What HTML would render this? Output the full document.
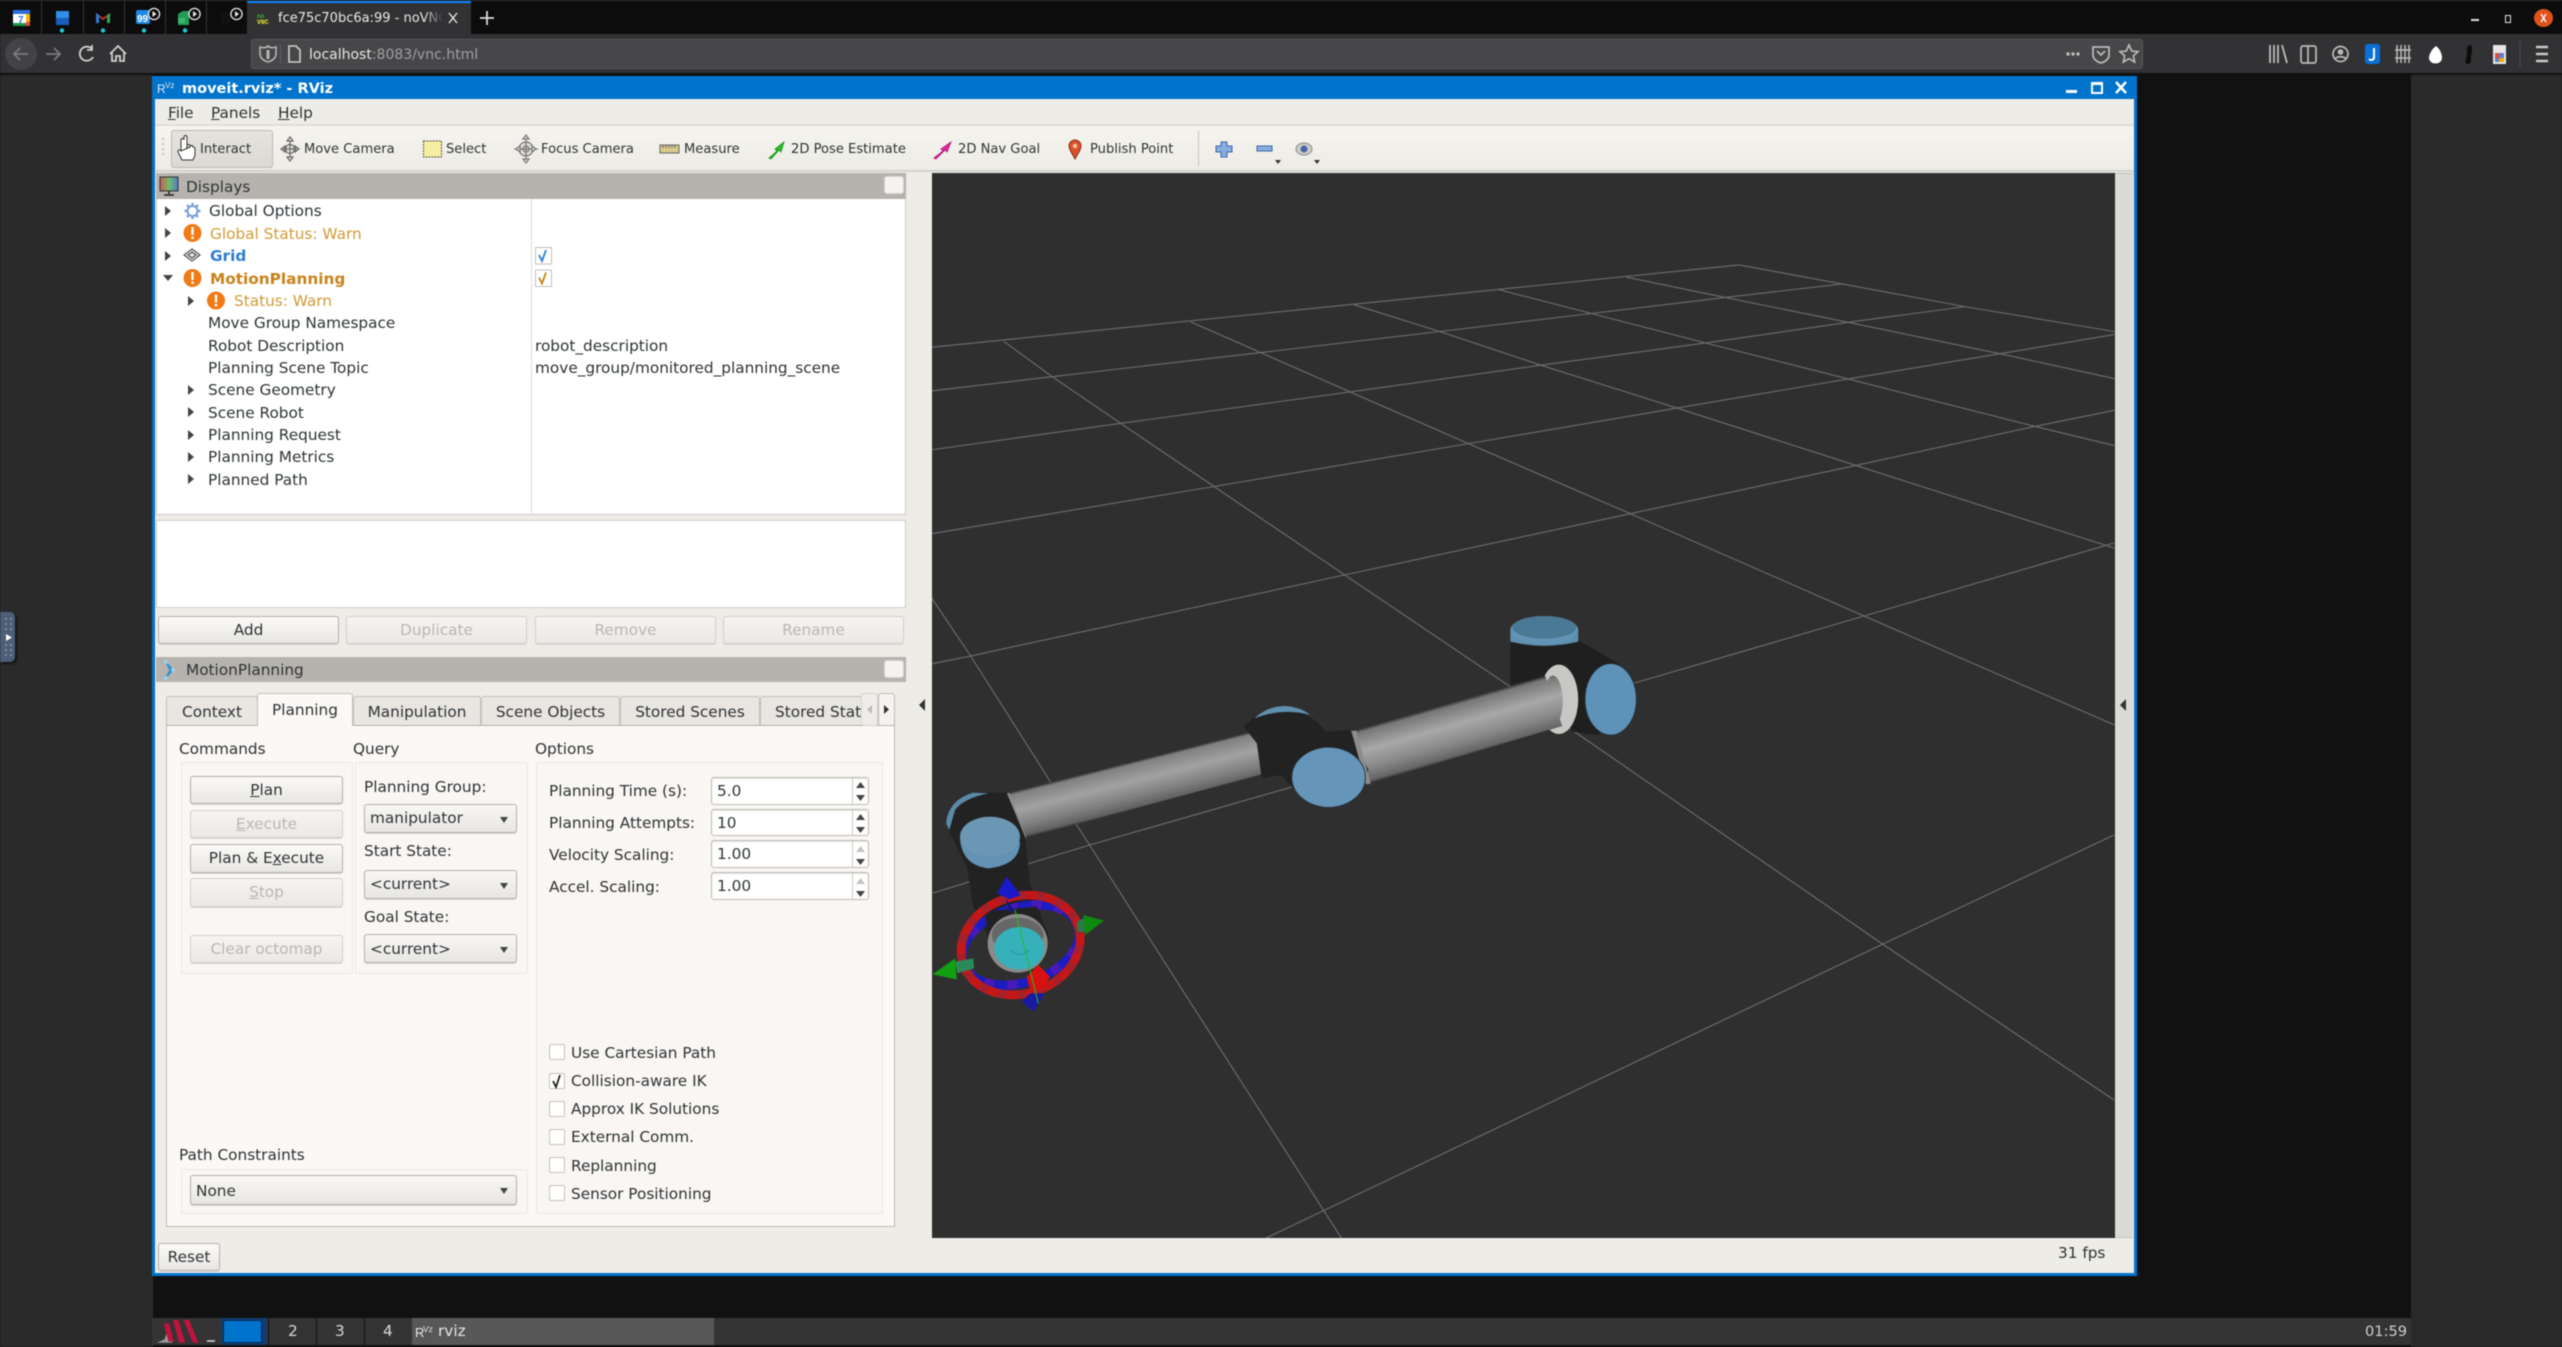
<!DOCTYPE html>
<html><head><meta charset="utf-8"><title>moveit.rviz - RViz</title>
<style>
html,body{margin:0;padding:0;background:#111}
#p{position:relative;width:2562px;height:1347px;overflow:hidden;background:#111;font-family:"DejaVu Sans","Liberation Sans",sans-serif;font-size:15.3px;color:#2e3436;filter:blur(.45px)}
#p div,#p span,#p svg{position:absolute;box-sizing:border-box}
.t{white-space:nowrap;line-height:20px;height:20px}
.tb{font-size:13.1px}
.b{background:linear-gradient(#fbfaf8,#e8e6e2);border:1px solid #b3b0ab;border-radius:3px;text-align:center;line-height:26px;white-space:nowrap;box-shadow:0 1px 0 #d8d6d2}
.d{color:#b9b7b3;border-color:#d2cfcb;background:linear-gradient(#f6f4f1,#ebe9e5)}
.c{background:linear-gradient(#f8f7f5,#e8e6e2);border:1px solid #b3b0ab;border-radius:3px;line-height:28px;padding-left:5px;white-space:nowrap;box-shadow:0 1px 0 #d8d6d2}
.c:after{content:"";position:absolute;right:8px;top:12px;border-left:4.5px solid transparent;border-right:4.5px solid transparent;border-top:6px solid #444}
.s{background:#fff;border:1px solid #bdbab5;border-radius:3px;line-height:27px;padding-left:5px;box-shadow:inset 0 1px 1px #e4e2df}
.s:before{content:"";position:absolute;right:15px;top:0;bottom:0;width:1px;background:#d0cdc9}
.k{width:16px;height:16px;background:#fff;border:1px solid #c4c1bd;border-radius:2px}
.tab{top:696px;height:30px;background:#e9e6e2;border:1px solid #c3c0bb;border-bottom:1px solid #b3b0ab;text-align:center;line-height:30px;white-space:nowrap;overflow:hidden;border-radius:3px 3px 0 0}
.g{background:#f9f6f3;border:1px solid #ece9e5;border-radius:2px}
.h{background:#b6b2ae}
.f{width:20px;height:18px;background:#f4f3f1;border:1px solid #d6d3cf;border-radius:3px}
.w{color:#d19b36}
</style></head>
<body><div id="p">

<!-- browser chrome -->
<div style="left:0;top:0;width:2562px;height:34px;background:#0c0c0c;border-top:1px solid #2e2e2e"></div>
<div style="left:0;top:34px;width:2562px;height:40px;background:#323234;border-bottom:1px solid #111"></div>
<div style="left:41px;top:1px;width:1px;height:33px;background:#333"></div>
<div style="left:83px;top:1px;width:1px;height:33px;background:#333"></div>
<div style="left:124px;top:1px;width:1px;height:33px;background:#333"></div>
<div style="left:165px;top:1px;width:1px;height:33px;background:#333"></div>
<div style="left:206px;top:1px;width:1px;height:33px;background:#333"></div>
<div style="left:247px;top:1px;width:224px;height:33px;background:#323234;border-top:2px solid #0a84ff"></div>
<svg style="left:0;top:0" width="520" height="34" viewBox="0 0 520 34">
<rect x="13" y="10" width="17" height="16" rx="2" fill="#fff"/><rect x="13" y="10" width="17" height="4" fill="#2a6fe0"/><rect x="26" y="14" width="4" height="8" fill="#f4b400"/><rect x="13" y="23" width="13" height="3" fill="#189a48"/><rect x="26" y="22" width="4" height="4" fill="#e24a33"/>
<text x="18" y="23" font-size="10" font-weight="bold" fill="#2a6fe0" font-family="Liberation Sans">7</text>
<rect x="56" y="11" width="13" height="7" fill="#2f8fe8"/><rect x="56" y="18" width="13" height="7" fill="#1a5dbb"/>
<path d="M96 23V13l7 5 7-5v10h-3v-6l-4 3-4-3v6z" fill="#d83b2e"/><path d="M96 23V13l3 2v8z" fill="#2a7de1"/><path d="M107 23V15l3-2v10z" fill="#2eaa55"/>
<path d="M136 12a2 2 0 0 1 2-2h10a2 2 0 0 1 2 2v10a2 2 0 0 1-2 2h-10a2 2 0 0 1-2-2z" fill="#1e88e5"/><text x="137" y="22" font-size="10" font-weight="bold" fill="#fff" font-family="Liberation Sans">99</text>
<path d="M178 14l5-3h6v14h-11z" fill="#1f9d55"/><rect x="178" y="18" width="7" height="5" fill="#3cb371"/>
<rect x="221" y="12" width="9" height="12" fill="#111"/>
<g fill="#0c0c0c" stroke="#e8e8e8" stroke-width="1.3"><circle cx="154" cy="14" r="5.6"/><circle cx="194.500" cy="14" r="5.6"/><circle cx="236.500" cy="14" r="5.600"/></g>
<g fill="#e8e8e8"><path d="M152.500 11l4 3-4 3z"/><path d="M193 11l4 3-4 3z"/><path d="M235 11l4 3-4 3z"/></g>
<g fill="#1fc7d4"><circle cx="62" cy="30.500" r="2.200"/><circle cx="103" cy="30.500" r="2.200"/><circle cx="144" cy="30.500" r="2.200"/><circle cx="185" cy="30.500" r="2.200"/></g>
<text x="257" y="18" font-size="6" font-weight="bold" fill="#2ec22e" font-family="Liberation Mono">no</text><text x="257" y="24" font-size="6.500" font-weight="bold" fill="#e6e62a" font-family="Liberation Mono">VNC</text>
<path d="M449 13l8 10m0-10l-8 10" stroke="#e5e5e5" stroke-width="1.4" fill="none"/>
<path d="M487 11v14m-7-7h14" stroke="#dcdcdc" stroke-width="1.800" fill="none"/>
</svg>
<div class="t" style="left:278px;top:8.500px;width:165px;overflow:hidden;color:#e8e8e8;font-size:13px;-webkit-mask-image:linear-gradient(90deg,#000 88%,transparent)">fce75c70bc6a:99 - noVNC</div>
<div style="left:2471px;top:19px;width:8px;height:2px;background:#ddd"></div>
<div style="left:2505px;top:15px;width:6px;height:8px;border:1.500px solid #ddd"></div>
<div style="left:2534px;top:9px;width:19px;height:18px;border-radius:50%;background:#e2521d"></div>
<svg style="left:2534px;top:9px" width="19" height="18"><path d="M7 5l5 8m0-8l-5 8" stroke="#fff" stroke-width="1.300"/></svg>

<div style="left:5px;top:38px;width:32px;height:32px;border-radius:50%;background:#434345"></div>
<svg style="left:0;top:34px" width="140" height="40" viewBox="0 0 140 40">
<path d="M28 20H14m6-6l-6 6 6 6" stroke="#7a7a7c" stroke-width="1.800" fill="none"/>
<path d="M60 20H46m8-6l6 6-6 6" stroke="#7a7a7c" stroke-width="1.800" fill="none"/>
<path d="M92 15a7 7 0 1 0 1 8M92 11v5h-5" stroke="#cfcfcf" stroke-width="1.800" fill="none"/>
<path d="M110 20l8-8 8 8M112 19v8h4v-5h4v5h4v-8" stroke="#cfcfcf" stroke-width="1.800" fill="none"/>
</svg>
<div style="left:251px;top:39px;width:1892px;height:30px;background:#474749;border:1px solid #575759;border-radius:3px"></div>
<div style="left:280px;top:44px;width:1px;height:20px;background:#5e5e60"></div>
<svg style="left:258px;top:44px" width="44" height="20"><path d="M2 3c3 1 6 1 8-1 2 2 5 2 8 1v7c0 4-4 7-8 8-4-1-8-4-8-8z" stroke="#b4b4b4" stroke-width="1.600" fill="none"/><path d="M10 6v9" stroke="#b4b4b4" stroke-width="3"/><path d="M31 2h7l4 4v12h-11z" stroke="#d0d0d0" stroke-width="1.600" fill="none"/></svg>
<div class="t" style="left:309px;top:45px;font-size:14px;color:#e5e5e5">localhost<span style="position:static;color:#a0a0a2">:8083/vnc.html</span></div>
<svg style="left:2060px;top:42px" width="88" height="24"><g fill="#bdbdbd"><circle cx="8" cy="12" r="1.700"/><circle cx="13" cy="12" r="1.700"/><circle cx="18" cy="12" r="1.700"/></g><path d="M33 5h16v8c0 4-4 7-8 8-4-1-8-4-8-8z" stroke="#bdbdbd" stroke-width="1.700" fill="none"/><path d="M37 9l4 4 4-4" stroke="#bdbdbd" stroke-width="1.700" fill="none"/><path d="M69 3l2.700 6 6.300.6-4.700 4.200 1.400 6.200-5.700-3.300-5.700 3.300 1.400-6.200L60 9.600l6.300-.6z" stroke="#bdbdbd" stroke-width="1.600" fill="none"/></svg>
<svg style="left:2268px;top:40px" width="290" height="28">
<path d="M2 5v18M6 5v18M10 5v18M14 5l5 18" stroke="#bbb" stroke-width="1.800" fill="none"/>
<rect x="33" y="6" width="15" height="17" rx="2" stroke="#bbb" stroke-width="1.700" fill="none"/><path d="M40 6v17" stroke="#bbb" stroke-width="1.700"/>
<circle cx="72.500" cy="14" r="7.500" stroke="#bbb" stroke-width="1.700" fill="none"/><circle cx="72.500" cy="12" r="2.800" fill="#bbb"/><path d="M67 19c2-3 9-3 11 0" stroke="#bbb" stroke-width="1.700" fill="none"/>
<rect x="97" y="4" width="15" height="20" rx="3" fill="#0a6fd8"/><path d="M106 8v10a3 3 0 0 1-5 1" stroke="#fff" stroke-width="2" fill="none"/>
<path d="M129 5v18M133 5v18M137 5v18M141 5v18M127 10h16M127 18h16" stroke="#bbb" stroke-width="1.500"/>
<path d="M168 6c4 3 6 8 6 12a6 5 0 0 1-13 0c0-4 3-9 7-12z" fill="#fff"/>
<path d="M199 10c0-3 1-5 3-5s2 3 2 5c0 3-1 4-1 7 0 3 0 7-3 7-2 0-3-2-2-5 1-3 1-6 1-9z" fill="#0b0b0b"/>
<rect x="225" y="5" width="13" height="19" fill="#e6e6e6"/><rect x="227" y="13" width="9" height="9" fill="#5a7fd0"/><rect x="227" y="13" width="4" height="5" fill="#dd4b39"/><rect x="231" y="18" width="5" height="4" fill="#f2a900"/>
<path d="M252 0v28" stroke="#4a4a4c"/>
<path d="M268 7h12M268 14h12M268 21h12" stroke="#c8c8c8" stroke-width="2.400"/>
</svg>

<!-- side panels -->
<div style="left:0;top:75px;width:153px;height:1272px;background:#2a2a2a"></div>
<div style="left:2411px;top:75px;width:151px;height:1272px;background:#2a2a2a"></div>
<div style="left:0;top:612px;width:15px;height:50px;background:#4d5f78;border-radius:0 5px 5px 0;box-shadow:2px 2px 2px #151515"></div>
<svg style="left:0;top:612px" width="15" height="50"><g fill="#7e8da3"><rect x="5" y="6" width="2" height="2"/><rect x="10" y="6" width="2" height="2"/><rect x="5" y="11" width="2" height="2"/><rect x="10" y="11" width="2" height="2"/><rect x="5" y="16" width="2" height="2"/><rect x="10" y="16" width="2" height="2"/><rect x="5" y="32" width="2" height="2"/><rect x="10" y="32" width="2" height="2"/><rect x="5" y="37" width="2" height="2"/><rect x="10" y="37" width="2" height="2"/><rect x="5" y="42" width="2" height="2"/><rect x="10" y="42" width="2" height="2"/></g><path d="M6 22l6 3.500-6 3.500z" fill="#fff"/></svg>

<!-- window -->
<div style="left:152px;top:76px;width:1985px;height:1200px;background:#0073cd"></div>
<div style="left:155px;top:99px;width:1979px;height:1174px;background:#eeece7"></div>
<svg style="left:157px;top:79px" width="22" height="18"><text x="0" y="14" font-size="12" fill="#e8e8e8" font-family="Liberation Sans">R</text><text x="8" y="9" font-size="8" fill="#e8e8e8" font-family="Liberation Sans">Vz</text></svg>
<div class="t" style="left:182px;top:78.500px;color:#fff;font-weight:bold;font-size:14.5px">moveit.rviz* - RViz</div>
<div style="left:2066px;top:90px;width:11px;height:3px;background:#fff"></div>
<div style="left:2091px;top:82px;width:12px;height:12px;border:2px solid #fff;border-top-width:3px"></div>
<svg style="left:2114px;top:80px" width="15" height="15"><path d="M2 2l10 11m0-11L2 13" stroke="#fff" stroke-width="2.500"/></svg>

<!-- menu -->
<div style="left:155px;top:124px;width:1979px;height:2px;background:#dfddd8"></div>
<div class="t" style="left:168px;top:103px"><u>F</u>ile</div>
<div class="t" style="left:211px;top:103px"><u>P</u>anels</div>
<div class="t" style="left:278px;top:103px"><u>H</u>elp</div>

<!-- toolbar -->
<div style="left:155px;top:126px;width:1979px;height:46px;background:linear-gradient(#f6f4ee,#f5f3ed 10%,#ecebe5)"></div>
<div style="left:155px;top:170px;width:1979px;height:2px;background:#d5d2cd"></div>
<div style="left:171px;top:130px;width:102px;height:38px;background:linear-gradient(#e6e3de,#dcd9d4);border:1px solid #bcb9b4;border-radius:3px"></div>
<div class="t tb" style="left:200px;top:140px">Interact</div>
<div class="t tb" style="left:304px;top:140px">Move Camera</div>
<div class="t tb" style="left:446px;top:140px">Select</div>
<div class="t tb" style="left:541px;top:140px">Focus Camera</div>
<div class="t tb" style="left:684px;top:140px">Measure</div>
<div class="t tb" style="left:791px;top:140px">2D Pose Estimate</div>
<div class="t tb" style="left:958px;top:140px">2D Nav Goal</div>
<div class="t tb" style="left:1090px;top:140px">Publish Point</div>
<div style="left:1198px;top:131px;width:1px;height:35px;background:#c8c5c0"></div>
<svg style="left:160px;top:128px" width="1180" height="42" viewBox="160 128 1180 42">
<g fill="#c3c0ba"><rect x="162" y="138" width="2" height="2"/><rect x="162" y="143" width="2" height="2"/><rect x="162" y="148" width="2" height="2"/><rect x="162" y="153" width="2" height="2"/></g>
<path d="M181 150v-10a1.500 1.500 0 0 1 3 0v-3a1.500 1.500 0 0 1 3 0v12m0-3a1.500 1.500 0 0 1 3 0m0 1a1.500 1.500 0 0 1 3 0c1 0 2 .5 2 2v6l-2 5h-11l-4-8c-.500-2 2-3 3-1z" fill="#fff" stroke="#333" stroke-width="1"/>
<g stroke="#666" stroke-width="1.200" fill="#e8e6df"><path d="M290 137l3 4h-6zM290 161l3-4h-6zM281 149l4-3v6zM299 149l-4-3v6z"/><circle cx="290" cy="149" r="4.500"/><path d="M290 141v16M283 149h14" fill="none"/></g>
<rect x="423.500" y="141" width="18" height="16" fill="#f7eea1" stroke="#555" stroke-dasharray="2 1"/>
<g stroke="#777" stroke-width="1.200" fill="#e0ddd6"><circle cx="526" cy="149" r="7"/><circle cx="526" cy="149" r="3"/><path d="M526 137v24M514 149h24" fill="none"/><path d="M526 135l3 4h-6zM526 163l3-4h-6zM516 149l4-3v6zM536 149l-4-3v6z"/></g>
<rect x="660" y="145" width="19" height="8" fill="#d9c98a" stroke="#666"/><path d="M663 145v3M666 145v3M669 145v3M672 145v3M675 145v3" stroke="#666"/>
<path d="M769 158l8-7-2-2 9-7-3 10-2-2-8 9z" fill="#25c025" stroke="#159015" stroke-width=".8"/>
<path d="M934 158l9-7-2-2 10-7-4 10-2-2-9 9z" fill="#ee22a8" stroke="#a01575" stroke-width=".8"/>
<path d="M1075 159c-3-6-6-9-6-13a6 6 0 0 1 12 0c0 4-3 7-6 13z" fill="#d9502c" stroke="#8f2a12"/><circle cx="1075" cy="146" r="2.200" fill="#f4c1a8"/>
<path d="M1221 142h6v4h5v6h-5v5h-6v-5h-5v-6h5z" fill="#88aee0" stroke="#3c68aa"/>
<rect x="1257" y="146" width="15" height="5" fill="#88aee0" stroke="#3c68aa"/>
<ellipse cx="1304" cy="149" rx="8" ry="6" fill="#cfcdc8" stroke="#888"/><circle cx="1304" cy="149" r="3.500" fill="#4a65a8"/>
<path d="M1275 160h6l-3 4zM1314 160h6l-3 4z" fill="#333"/>
</svg>

<!-- Displays dock -->
<div class="h" style="left:156px;top:173px;width:750px;height:26px"></div>
<svg style="left:159px;top:176px" width="22" height="21"><defs><linearGradient id="m"><stop offset="0" stop-color="#d05a50"/><stop offset=".5" stop-color="#6bbf6b"/><stop offset="1" stop-color="#5577cc"/></linearGradient></defs><rect x="1" y="1" width="18" height="14" fill="url(#m)" stroke="#333"/><path d="M10 15v3M5 19h10" stroke="#222" stroke-width="1.500"/></svg>
<div class="t" style="left:186px;top:176.500px">Displays</div>
<div class="f" style="left:884px;top:176px"></div>
<div style="left:156px;top:199px;width:750px;height:316px;background:#fff;border:1px solid #cfccc8;border-top:0"></div>
<div style="left:531px;top:199px;width:1px;height:315px;background:#dcdad7"></div>
<svg style="left:156px;top:199px" width="400" height="300" viewBox="156 199 400 300">
<g fill="#444"><path d="M165 206l6 5-6 5zM165 228l6 5-6 5zM165 251l6 5-6 5zM188 296l6 5-6 5zM188 385l6 5-6 5zM188 407l6 5-6 5zM188 430l6 5-6 5zM188 452l6 5-6 5zM188 474l6 5-6 5z"/><path d="M163 275l10 0-5 6z"/></g>
<g stroke="#7ba0d8" stroke-width="2" fill="none"><circle cx="192.500" cy="211" r="5"/><path d="M192.500 203v3M192.500 216v3M184.500 211h3M197.500 211h3M187 205l2 2M196 215l2 2M198 205l-2 2M189 215l-2 2" stroke-width="2.500"/></g>
<g><circle cx="192.500" cy="233" r="9" fill="#f07a16"/><circle cx="192.500" cy="278" r="9" fill="#f07a16"/><circle cx="216" cy="300.500" r="9" fill="#f07a16"/></g>
<g fill="#fff"><rect x="191.300" y="227" width="2.400" height="8"/><rect x="191.300" y="236.500" width="2.400" height="2.400"/><rect x="191.300" y="272" width="2.400" height="8"/><rect x="191.300" y="281.500" width="2.400" height="2.400"/><rect x="214.800" y="294.500" width="2.400" height="8"/><rect x="214.800" y="304" width="2.400" height="2.400"/></g>
<path d="M192 249l8 6-8 6-8-6zM188 255l4-3 4 3-4 3z" stroke="#555" stroke-width="1.200" fill="#e8e8e8"/>
<rect x="535.500" y="247.500" width="16" height="16.500" fill="#fff" stroke="#c4c1bd"/><path d="M539 255l3 6 4-11" stroke="#2a7fd0" stroke-width="1.800" fill="none"/>
<rect x="535.500" y="270" width="16" height="16.500" fill="#fff" stroke="#c4c1bd"/><path d="M539 277.500l3 6 4-11" stroke="#c8820f" stroke-width="1.800" fill="none"/>
</svg>
<div class="t" style="left:209px;top:201px">Global Options</div>
<div class="t w" style="left:210px;top:223.500px">Global Status: Warn</div>
<div class="t" style="left:210px;top:246px;color:#2f7dd1;font-weight:bold">Grid</div>
<div class="t" style="left:210px;top:268.500px;color:#c9831a;font-weight:bold">MotionPlanning</div>
<div class="t w" style="left:234px;top:290.500px">Status: Warn</div>
<div class="t" style="left:208px;top:313px">Move Group Namespace</div>
<div class="t" style="left:208px;top:335.500px">Robot Description</div>
<div class="t" style="left:208px;top:357.500px">Planning Scene Topic</div>
<div class="t" style="left:208px;top:380px">Scene Geometry</div>
<div class="t" style="left:208px;top:402.500px">Scene Robot</div>
<div class="t" style="left:208px;top:424.500px">Planning Request</div>
<div class="t" style="left:208px;top:447px">Planning Metrics</div>
<div class="t" style="left:208px;top:469.500px">Planned Path</div>
<div class="t" style="left:535px;top:335.500px">robot_description</div>
<div class="t" style="left:535px;top:357.500px">move_group/monitored_planning_scene</div>

<div style="left:156px;top:520px;width:750px;height:88px;background:#fff;border:1px solid #cfccc8"></div>
<div class="b" style="left:158px;top:616px;width:181px;height:28px">Add</div>
<div class="b d" style="left:346px;top:616px;width:181px;height:28px">Duplicate</div>
<div class="b d" style="left:535px;top:616px;width:181px;height:28px">Remove</div>
<div class="b d" style="left:723px;top:616px;width:181px;height:28px">Rename</div>

<!-- MotionPlanning dock -->
<div class="h" style="left:156px;top:657px;width:750px;height:25px"></div>
<svg style="left:162px;top:659px" width="16" height="22"><path d="M3 2l8 9-8 9 5-9z" fill="#2a8fd8" stroke="#2a8fd8"/><circle cx="4" cy="3" r="2" fill="#9cd0f0"/><circle cx="11" cy="11" r="2" fill="#9cd0f0"/><circle cx="4" cy="19" r="2" fill="#9cd0f0"/></svg>
<div class="t" style="left:186px;top:660px">MotionPlanning</div>
<div class="f" style="left:884px;top:660px"></div>

<div style="left:166px;top:725px;width:729px;height:502px;background:#fbf8f5;border:1px solid #bcb9b4"></div>
<div class="tab" style="left:166px;width:92px">Context</div>
<div class="tab" style="left:353px;width:128px">Manipulation</div>
<div class="tab" style="left:481px;width:139px">Scene Objects</div>
<div class="tab" style="left:620px;width:140px">Stored Scenes</div>
<div class="tab" style="left:760px;width:105px;text-align:left;padding-left:14px;border-right:0">Stored States</div>
<div class="tab" style="left:257px;width:96px;top:693px;height:33px;background:#fbf8f5;border-bottom:0;line-height:32px">Planning</div>
<div style="left:861px;top:693px;width:17px;height:33px;background:#efedea;border:1px solid #d5d2ce;border-radius:3px"></div>
<div style="left:878px;top:693px;width:17px;height:33px;background:#f5f3f0;border:1px solid #bcb9b4;border-radius:3px"></div>
<svg style="left:861px;top:693px" width="34" height="33"><path d="M11 12l-5 4.500 5 4.500z" fill="#bbb"/><path d="M23 12l5 4.500-5 4.500z" fill="#333"/></svg>

<div class="t" style="left:179px;top:739px">Commands</div>
<div class="t" style="left:353px;top:739px">Query</div>
<div class="t" style="left:535px;top:739px">Options</div>
<div class="g" style="left:181px;top:762px;width:172px;height:212px"></div>
<div class="g" style="left:355px;top:762px;width:173px;height:212px"></div>
<div class="g" style="left:536px;top:762px;width:347px;height:452px"></div>

<div class="b" style="left:190px;top:776px;width:153px;height:28px"><u>P</u>lan</div>
<div class="b d" style="left:190px;top:810px;width:153px;height:28px"><u>E</u>xecute</div>
<div class="b" style="left:190px;top:844px;width:153px;height:29px">Plan &amp; E<u>x</u>ecute</div>
<div class="b d" style="left:190px;top:878px;width:153px;height:29px;line-height:27px"><u>S</u>top</div>
<div class="b d" style="left:190px;top:935px;width:153px;height:28px">Clear octomap</div>

<div class="t" style="left:364px;top:776.500px">Planning Group:</div>
<div class="c" style="left:364px;top:804px;width:153px;height:29px;line-height:27px">manipulator</div>
<div class="t" style="left:364px;top:841px">Start State:</div>
<div class="c" style="left:364px;top:870px;width:153px;height:29px;line-height:27px">&lt;current&gt;</div>
<div class="t" style="left:364px;top:907px">Goal State:</div>
<div class="c" style="left:364px;top:934px;width:153px;height:29px">&lt;current&gt;</div>

<div class="t" style="left:179px;top:1145px">Path Constraints</div>
<div class="g" style="left:181px;top:1169px;width:347px;height:45px"></div>
<div class="c" style="left:190px;top:1175px;width:327px;height:30px;line-height:30px">None</div>

<div class="t" style="left:549px;top:781px">Planning Time (s):</div>
<div class="t" style="left:549px;top:813px">Planning Attempts:</div>
<div class="t" style="left:549px;top:845px">Velocity Scaling:</div>
<div class="t" style="left:549px;top:877px">Accel. Scaling:</div>
<div class="s" style="left:711px;top:777px;width:158px;height:28px">5.0</div>
<div class="s" style="left:711px;top:809px;width:158px;height:27px">10</div>
<div class="s" style="left:711px;top:840px;width:158px;height:28px">1.00</div>
<div class="s" style="left:711px;top:872px;width:158px;height:28px">1.00</div>
<svg style="left:853px;top:777px" width="16" height="124"><g fill="#444"><path d="M3 11l4.500-6 4.500 6zM3 18l4.500 6 4.500-6zM3 43l4.500-6 4.500 6zM3 50l4.500 6 4.500-6zM3 82l4.500 6 4.500-6zM3 114l4.500 6 4.500-6z"/></g><g fill="#c4c2bf"><path d="M3 75l4.500-6 4.500 6zM3 107l4.500-6 4.500 6z"/></g></svg>

<div class="k" style="left:549px;top:1044px"></div>
<div class="k" style="left:549px;top:1073px"></div>
<div class="k" style="left:549px;top:1101px"></div>
<div class="k" style="left:549px;top:1129px"></div>
<div class="k" style="left:549px;top:1157px"></div>
<div class="k" style="left:549px;top:1185px"></div>
<svg style="left:549px;top:1073px" width="16" height="16"><path d="M4 8l3 6 4-12" stroke="#222" stroke-width="1.800" fill="none"/></svg>
<div class="t" style="left:571px;top:1042.500px">Use Cartesian Path</div>
<div class="t" style="left:571px;top:1071px">Collision-aware IK</div>
<div class="t" style="left:571px;top:1099px">Approx IK Solutions</div>
<div class="t" style="left:571px;top:1127px">External Comm.</div>
<div class="t" style="left:571px;top:1155.500px">Replanning</div>
<div class="t" style="left:571px;top:1183.500px">Sensor Positioning</div>

<div class="b" style="left:158px;top:1243px;width:62px;height:28px">Reset</div>
<div class="t" style="left:2058px;top:1242.500px">31 fps</div>

<!-- 3D view -->
<div style="left:932px;top:173px;width:1183px;height:1065px;background:#2f2f2f"></div>
<div style="left:2115px;top:173px;width:18px;height:1065px;background:#dcdad7;border-top:1px solid #bbb;border-bottom:1px solid #c4c2bf"></div>
<svg style="left:916px;top:695px" width="12" height="20"><path d="M9 4l-6 6 6 6z" fill="#333"/></svg>
<svg style="left:2117px;top:695px" width="12" height="20"><path d="M9 4l-6 6 6 6z" fill="#333"/></svg>
<svg style="left:932px;top:173px" width="1183" height="1065" viewBox="932 173 1183 1065">
<defs>
<linearGradient id="a1" gradientUnits="userSpaceOnUse" x1="895" y1="392" x2="956" y2="539"><stop offset="0" stop-color="#333"/><stop offset=".06" stop-color="#777"/><stop offset=".4" stop-color="#a8a8a8"/><stop offset=".7" stop-color="#8a8a8a"/><stop offset=".94" stop-color="#666"/><stop offset="1" stop-color="#2e2e2e"/></linearGradient>
<linearGradient id="a2" gradientUnits="userSpaceOnUse" x1="178" y1="580" x2="226" y2="711"><stop offset="0" stop-color="#333"/><stop offset=".06" stop-color="#808080"/><stop offset=".4" stop-color="#a2a2a2"/><stop offset=".72" stop-color="#808080"/><stop offset=".94" stop-color="#606060"/><stop offset="1" stop-color="#2a2a2a"/></linearGradient>
</defs>
<g fill="none" stroke="#6e6e6e" stroke-width="1.100">
<g transform="translate(930 170) scale(.7781 .3827)">
<polyline vector-effect="non-scaling-stroke" points="3,463 1040,248"/>
<polyline vector-effect="non-scaling-stroke" points="3,577 157,540 425,477 655,422 850,375 1022,333 1175,297"/>
<polyline vector-effect="non-scaling-stroke" points="3,731 245,662 540,580 785,510 997,452 1180,398 1330,357"/>
<polyline vector-effect="non-scaling-stroke" points="3,950 365,827 692,715 960,622 1180,546 1375,480 1522,430"/>
<polyline vector-effect="non-scaling-stroke" points="3,1290 52,1270 533,1058 900,898 1190,772 1420,670 1522,628"/>
<polyline vector-effect="non-scaling-stroke" points="1040,248 1330,357 1522,422"/>
<polyline vector-effect="non-scaling-stroke" points="895,280 1022,333 1180,398 1375,480 1522,545"/>
<polyline vector-effect="non-scaling-stroke" points="730,312 850,375 997,452 1180,546 1420,670 1522,720"/>
<polyline vector-effect="non-scaling-stroke" points="545,352 655,422 785,510 960,622 1190,772 1522,988"/>
<polyline vector-effect="non-scaling-stroke" points="335,397 425,477 540,580 692,715 900,898 1200,1165 1522,1450"/>
<polyline vector-effect="non-scaling-stroke" points="95,448 157,540 245,662 365,827 533,1058 742,1345 830,1470"/>
</g>
<polyline points="932,598.600 970,655 1043,770 1078,827 1342,1239"/>
<polyline points="1575,732 1882.500,944 2114,1100"/>
<polyline points="1264,1239 1883,944 2114,835"/>
<polyline points="933,893 1089.600,845 1293,786.700 1638,682 1864,616 2114,543"/>
</g>
<!-- robot -->
<g transform="translate(920 600) scale(.4847 .3333)">
<path d="M1218,90 L1218,255 L1290,228 L1345,395 L1400,405 L1478,260 L1440,190 L1358,120 L1358,90 Z" fill="#1f1f1f"/>
<path d="M1218,90 L1218,125 Q1288,150 1358,125 L1358,90 Z" fill="#5c8fb0"/>
<ellipse cx="1288" cy="90" rx="70" ry="42" fill="#6295b5"/><ellipse cx="1288" cy="82" rx="66" ry="34" fill="#4a7995"/>
<ellipse cx="1318" cy="298" rx="40" ry="104" fill="#c9c7c4"/>
<path d="M895,392 L1290,228 L1325,378 L925,552 Z" fill="url(#a1)"/>
<ellipse cx="1306" cy="303" rx="20" ry="76" fill="url(#a1)"/>
<ellipse cx="1425" cy="298" rx="53" ry="107" fill="#5f92b8" stroke="#25343d" stroke-width="2"/>
<path d="M178,580 L695,392 L712,520 L215,715 Z" fill="url(#a2)"/>
<path d="M668,380 Q700,330 745,320 Q800,330 838,395 L885,390 L925,510 L915,565 L770,565 L745,525 L705,535 L695,430 Z" fill="#222"/>
<path d="M895,392 L925,552" stroke="#8d8d8d" stroke-width="10"/>
<path d="M690,355 Q715,320 750,318 Q785,320 805,345 Q750,322 690,355 Z" fill="#5f90ae"/>
<ellipse cx="843" cy="532" rx="76" ry="90" fill="#6595b9" stroke="#26343d" stroke-width="2"/>
<path d="M180,580 L215,715" stroke="#8d8d8d" stroke-width="9"/>
</g>
<g transform="translate(920 780) scale(.33333)">
<path d="M78,125 Q100,50 165,38 L260,38 L315,170 L330,310 L385,470 L300,540 L210,480 L160,380 L140,260 L85,150 Z" fill="#222"/>
<path d="M78,130 Q85,60 160,38 L205,40 Q130,55 105,90 L88,150 Z" fill="#5a8aa8"/>
<path d="M120,175 L300,185 Q300,255 205,265 Q125,255 120,175Z" fill="#6292b4"/>
<ellipse cx="210" cy="170" rx="90" ry="60" fill="#6b97b5"/>
<ellipse cx="302" cy="495" rx="182" ry="112" transform="rotate(-18 302 495)" fill="none" stroke="#1c1cc0" stroke-width="28"/>
<ellipse cx="302" cy="495" rx="182" ry="112" transform="rotate(-18 302 495)" fill="none" stroke="#5a1ab8" stroke-width="28" stroke-dasharray="30 40" opacity=".7"/>
<path d="M195,395 L350,380 L388,470 L205,485 Z" fill="#222"/>
<ellipse cx="302" cy="495" rx="182" ry="146" transform="rotate(-18 302 495)" fill="none" stroke="#c41818" stroke-width="26"/>
<ellipse cx="302" cy="495" rx="182" ry="146" transform="rotate(-18 302 495)" fill="none" stroke="#a52028" stroke-width="26" stroke-dasharray="24 34"/>
<ellipse cx="293" cy="490" rx="90" ry="88" fill="#8a8a8a"/>
<ellipse cx="293" cy="465" rx="78" ry="52" fill="#4a4a4a" opacity=".55"/>
<ellipse cx="298" cy="505" rx="75" ry="64" fill="#36b0bb"/>
<path d="M275,510a26 18 0 0 0 50 0" fill="none" stroke="#1f8088" stroke-width="2"/>
<path d="M232,340 L260,290 L302,345 L270,358 Z" fill="#1a1acb"/><path d="M258,355 L285,395 L268,395 Z" fill="#17178a"/>
<path d="M305,665 L340,695 L375,640 L330,640 Z" fill="#1a1aa0"/>
<path d="M490,405 L552,422 L495,465 Z" fill="#0f8a0f"/><path d="M470,425 L492,415 L495,455 L472,455 Z" fill="#2a7a4a"/>
<path d="M38,583 L105,535 L110,598 Z" fill="#12a012"/><path d="M105,545 L160,535 L162,565 L112,580 Z" fill="#2a8a5a"/>
<path d="M320,590 L355,555 L390,590 L365,630 L330,630 Z" fill="#d81010"/>
<path d="M285,390 L355,670" stroke="#20c020" stroke-width="3" fill="none"/>
</g>
</svg>

<!-- taskbar -->
<div style="left:152px;top:1318px;width:2259px;height:27px;background:#343434"></div>
<div style="left:221px;top:1318px;width:46px;height:27px;background:#123d70"></div>
<div style="left:223px;top:1320px;width:39px;height:23px;background:#0073cd;border:1px solid #062a52"></div>
<div style="left:268px;top:1318px;width:1px;height:27px;background:#111"></div>
<div style="left:316px;top:1318px;width:1px;height:27px;background:#111"></div>
<div style="left:364px;top:1318px;width:1px;height:27px;background:#111"></div>
<div style="left:412px;top:1318px;width:302px;height:27px;background:#585858"></div>
<svg style="left:150px;top:1300px" width="80" height="47"><g transform="scale(.3827 .3333)"><path d="M18 128l20-10 12-40 8 50z" fill="#9a9a9a"/><path d="M36 70h14l12 55H48zM60 60h14l18 68H76zM88 60h14l24 68h-14z" fill="#c3123e"/></g><path d="M57 41h8" stroke="#ddd" stroke-width="1.500"/></svg>
<div class="t" style="left:288px;top:1321px;color:#d8d8d8">2</div>
<div class="t" style="left:335px;top:1321px;color:#d8d8d8">3</div>
<div class="t" style="left:383px;top:1321px;color:#d8d8d8">4</div>
<svg style="left:414px;top:1322px" width="24" height="19"><text x="1" y="15" font-size="13" fill="#e6e6e6" font-family="Liberation Sans">R</text><text x="9" y="10" font-size="8.500" fill="#e6e6e6" font-family="Liberation Sans">Vz</text></svg>
<div class="t" style="left:438px;top:1321px;color:#e4e4e4">rviz</div>
<div class="t" style="left:2365px;top:1322px;color:#cfcfcf;font-size:14.6px">01:59</div>
</div></body></html>
